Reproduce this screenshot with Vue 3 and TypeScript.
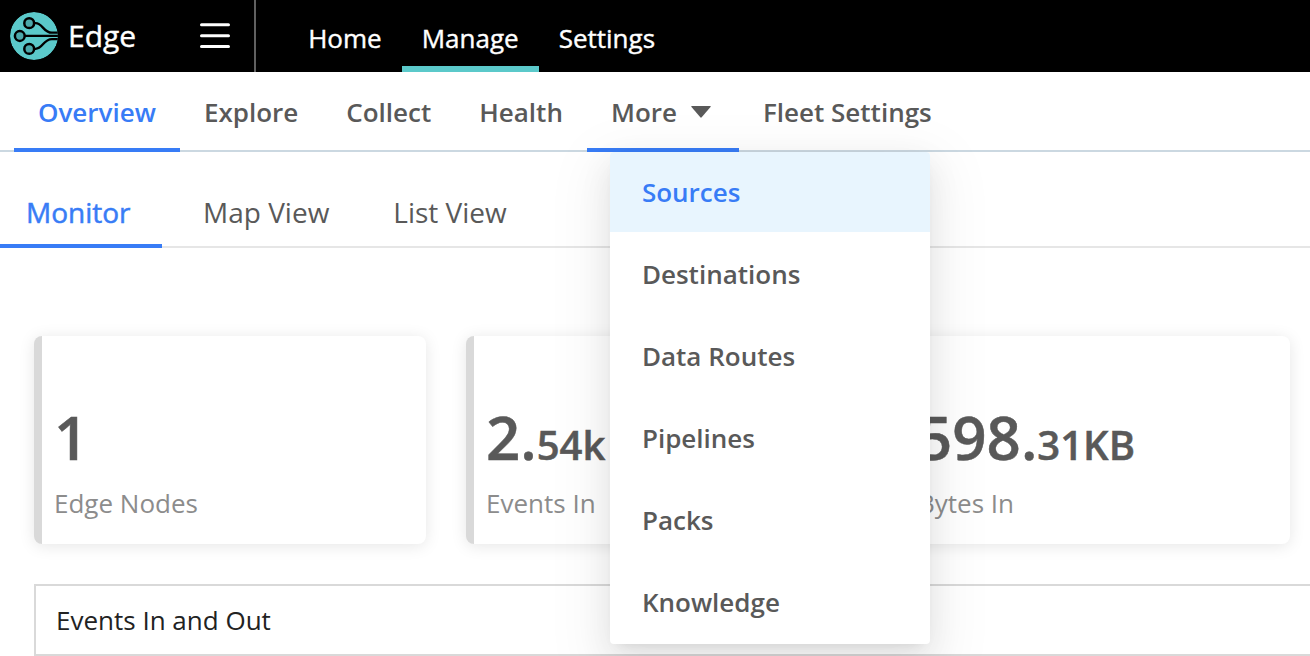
<script setup lang="ts">
import { ref } from 'vue'

interface Stat {
  whole: string
  rest: string
  label: string
}

const navItems: string[] = ['Home', 'Manage', 'Settings']
const activeNav = ref('Manage')
const tabs: string[] = ['Overview', 'Explore', 'Collect', 'Health', 'More', 'Fleet Settings']
const underlinedTabs = ref<string[]>(['Overview', 'More'])
const activeTab = ref('Overview')
const views: string[] = ['Monitor', 'Map View', 'List View']
const activeView = ref('Monitor')
const menu: string[] = ['Sources', 'Destinations', 'Data Routes', 'Pipelines', 'Packs', 'Knowledge']
const activeMenu = ref('Sources')
const stats: Stat[] = [
  { whole: '1', rest: '', label: 'Edge Nodes' },
  { whole: '2.', rest: '54k', label: 'Events In' },
  { whole: '598.', rest: '31KB', label: 'Bytes In' },
]
</script>

<template>
  <div class="page">
    <header class="topbar">
      <div class="brand">
        <svg class="logo" width="48" height="48" viewBox="0 0 48 48">
          <defs>
            <clipPath id="disc"><circle cx="24" cy="24" r="24" /></clipPath>
          </defs>
          <g clip-path="url(#disc)">
            <circle cx="24" cy="24" r="24" fill="#5bc9ca" />
            <g fill="none" stroke="#000" stroke-width="2.3">
              <path d="M24 11.2h1.5C33 11.2 33 20.7 42 20.7h6" />
              <path d="M15 23.9h33" />
              <path d="M24 36.8h1.5C33 36.8 33 27.1 42 27.1h6" />
            </g>
            <g fill="#4ba9ab" stroke="#000" stroke-width="2.5">
              <circle cx="19.2" cy="11.2" r="4.9" />
              <circle cx="9.8" cy="24" r="4.9" />
              <circle cx="19.2" cy="36.9" r="4.9" />
            </g>
          </g>
        </svg>
        <span class="product">Edge</span>
        <svg class="burger" width="30" height="26" viewBox="0 0 30 26">
          <path d="M1.5 1.8h27M1.5 12.7h27M1.5 23.6h27" stroke="#fff" stroke-width="3" stroke-linecap="round" />
        </svg>
      </div>
      <nav class="main-nav">
        <a v-for="item in navItems" :key="item" class="nav-item" :class="{ active: item === activeNav }">{{ item }}</a>
      </nav>
    </header>

    <nav class="tabs">
      <div
        v-for="tab in tabs"
        :key="tab"
        class="tab"
        :class="{ current: tab === activeTab, underlined: underlinedTabs.includes(tab) }"
      >
        <span>{{ tab }}</span>
        <template v-if="tab === 'More'">
          <svg class="caret" width="20" height="12" viewBox="0 0 20 12">
            <path d="M.8 0h18.4q1 0 .3.9L10.7 11.3q-.7.8-1.4 0L.5.9Q-.2 0 .8 0z" fill="#595959" />
          </svg>
          <ul class="menu">
            <li v-for="entry in menu" :key="entry" :class="{ chosen: entry === activeMenu }">{{ entry }}</li>
          </ul>
        </template>
      </div>
    </nav>

    <nav class="views">
      <div v-for="view in views" :key="view" class="view" :class="{ active: view === activeView }">{{ view }}</div>
    </nav>

    <main class="content">
      <section class="cards">
        <article v-for="stat in stats" :key="stat.label" class="card">
          <div class="value">{{ stat.whole }}<span class="rest">{{ stat.rest }}</span></div>
          <div class="label">{{ stat.label }}</div>
        </article>
      </section>
      <section class="panel">Events In and Out</section>
    </main>
  </div>
</template>

<style>
html,
body {
  margin: 0;
  overflow: hidden;
  background: #fff;
}
</style>

<style scoped>
* {
  box-sizing: border-box;
}
.page {
  width: 1310px;
  height: 656px;
  overflow: hidden;
  background: #fff;
  font-family: 'Open Sans', 'Noto Sans', sans-serif;
  font-size: 26px;
  color: #595959;
  white-space: nowrap;
}
.topbar {
  display: flex;
  height: 72px;
  background: #000;
  color: #fff;
  -webkit-text-stroke: 0.4px currentColor;
}
.brand {
  display: flex;
  align-items: center;
  width: 256px;
  padding-left: 10px;
  border-right: 2px solid #606060;
}
.logo {
  flex: none;
}
.product {
  width: 132px;
  margin-left: 10px;
  padding-bottom: 2px;
  font-size: 30px;
}
.burger {
  flex: none;
}
.main-nav {
  display: flex;
  padding-left: 32.2px;
}
.nav-item {
  height: 72px;
  padding: 3px 20px 0;
  line-height: 70px;
  border-bottom: 6px solid transparent;
}
.nav-item.active {
  border-bottom-color: #5bc9ca;
}
.tabs {
  display: flex;
  height: 80px;
  padding-left: 14px;
  border-bottom: 2px solid #cbd8e1;
  font-weight: 600;
}
.tab {
  position: relative;
  display: flex;
  height: 80px;
  padding: 0 24px;
  line-height: 80px;
  border-bottom: 4px solid transparent;
}
.tab.current {
  color: #387cf6;
}
.tab.underlined {
  border-bottom-color: #387cf6;
}
.caret {
  margin: 34px 4px 0 14px;
}
.menu {
  position: absolute;
  z-index: 2;
  top: 80px;
  left: 23px;
  width: 320px;
  height: 492px;
  margin: 0;
  padding: 0;
  overflow: visible;
  list-style: none;
  background: #fff;
  border-radius: 4px;
  box-shadow: 0 6px 12px -8px rgba(0, 0, 0, 0.12), 0 12px 32px rgba(0, 0, 0, 0.08), 0 18px 56px 16px rgba(0, 0, 0, 0.05);
}
.menu li {
  height: 80px;
  margin-bottom: 2px;
  padding-left: 32px;
  line-height: 80px;
}
.menu li.chosen {
  color: #387cf6;
  background: #e8f5fe;
  border-radius: 4px 4px 0 0;
}
.views {
  display: flex;
  gap: 9px;
  height: 96px;
  border-bottom: 2px solid #e6e6e6;
  font-size: 28px;
}
.view {
  height: 96px;
  padding: 0 32px;
  line-height: 120px;
  border-bottom: 4px solid transparent;
}
.view + .view + .view {
  margin-left: -9px;
}
.view.active {
  width: 162px;
  padding-left: 26px;
  color: #387cf6;
  border-bottom-color: #387cf6;
  -webkit-text-stroke: 0.5px currentColor;
}
.content {
  padding: 88px 0 0 34px;
}
.cards {
  display: grid;
  grid-template-columns: repeat(3, 392px);
  gap: 40px;
}
.card {
  height: 208px;
  padding: 65px 12px 0;
  background: #fff;
  border-left: 8px solid #d9d9d9;
  border-radius: 8px;
  box-shadow: 0 2px 16px rgba(0, 0, 0, 0.1);
}
.value {
  height: 72px;
  line-height: 72px;
  font-size: 60px;
  font-weight: 600;
  -webkit-text-stroke: 0.5px currentColor;
}
.rest {
  font-size: 40px;
}
.label {
  margin-top: 12px;
  line-height: 36px;
  color: #8c8c8c;
}
.panel {
  width: 1300px;
  height: 72px;
  margin-top: 40px;
  padding-left: 20px;
  line-height: 69px;
  color: #222;
  background: #fff;
  border: 2px solid #d9d9d9;
}
</style>
